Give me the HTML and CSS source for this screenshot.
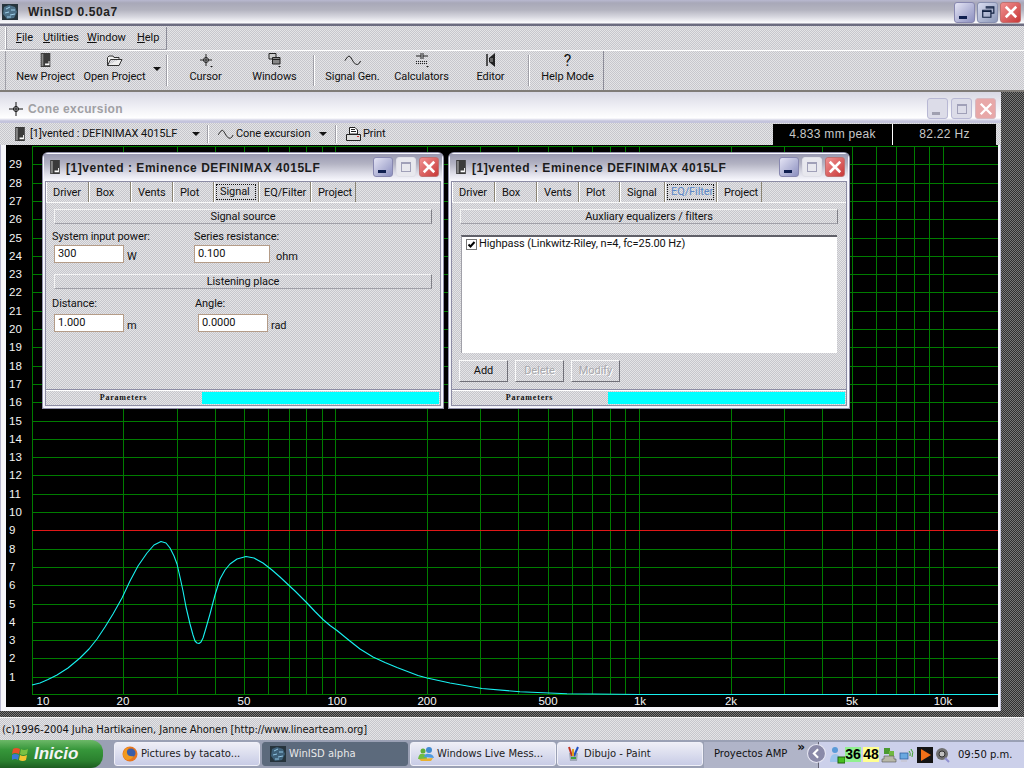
FILE: index.html
```html
<!DOCTYPE html>
<html lang="en">
<head>
<meta charset="utf-8">
<title>WinISD 0.50a7</title>
<link rel="stylesheet" href="styles.css">
</head>
<body>
<svg class="defs" width="0" height="0">
  <symbol id="box" viewBox="0 0 11 16"><path d="M0 0H11V16H0Z" fill="#3a3a3a"/><path d="M1 1H3V15H1Z" fill="#8a8a8a"/><path d="M7 9H9V12H5V14H10V9Z" fill="#fff"/></symbol>
  <symbol id="wave" viewBox="0 0 17 11"><path d="M0 6L3 2Q4.500 0 6 2L9 7Q11 10 13 9.500T16 6" fill="none" stroke="#222" stroke-width="1"/></symbol>
</svg>
<div class="app">
  <header class="titlebar">
    <svg class="app-icon" viewBox="0 0 16 16"><rect width="16" height="16" fill="#26343c"/><path d="M2 3L7 1L13 3L15 8L12 14L5 15L1 10Z" fill="#4b6f86"/><path d="M4 5L8 3M9 6L13 6M3 9L7 8M8 11L13 10M5 13L9 13" stroke="#9fd0ea" stroke-width="1"/></svg>
    <span class="title-main">WinISD 0.50a7</span>
    <div class="caption-btns caption-main">
      <div class="cap cap-min"><i class="glyph-min"></i></div>
      <div class="cap cap-res"><svg viewBox="0 0 12 12" class="glyph"><path d="M4 1.500H11V7H9M1.500 4.500H8.500V10.500H1.500Z" fill="none" stroke="#102040"/><path d="M4 2.500H11M1 5.500H9" stroke="#102040"/></svg></div>
      <div class="cap cap-close"><svg viewBox="0 0 12 12" class="glyph"><path d="M1.500 1.500L10.500 10.500M10.500 1.500L1.500 10.500" stroke="#fff" stroke-width="2.200"/></svg></div>
    </div>
  </header>

  <div class="menubar-row">
    <nav class="menubar">
      <span class="menu-item menu-file"><u>F</u>ile</span>
      <span class="menu-item menu-util"><u>U</u>tilities</span>
      <span class="menu-item menu-win"><u>W</u>indow</span>
      <span class="menu-item"><u>H</u>elp</span>
    </nav>
  </div>

  <div class="toolbar-row">
    <div class="toolbar">
      <div class="tb-btn"><svg class="tb-icon"><use href="#box" x="3" y="1" width="11" height="14"/></svg><span>New Project</span></div>
      <div class="tb-btn"><svg class="tb-icon" viewBox="0 0 18 16"><path d="M1.500 13.500V5.500L3 4H7L8 5.500H13V7.500M1.500 13.500H13L16 7.500H4.500L1.500 13.500Z" fill="#eee" stroke="#333"/></svg><span>Open Project</span></div>
      <i class="arrow arrow-tb"></i>
      <i class="tb-sep tb-sep-a"></i>
      <div class="tb-btn"><svg class="tb-icon" viewBox="0 0 18 16"><path d="M9 2V14M3 8H15" stroke="#222"/><circle cx="9" cy="8" r="2.500" fill="none" stroke="#222"/><path d="M13 14H16L14.500 15.500Z" fill="#222"/></svg><span>Cursor</span></div>
      <div class="tb-btn"><svg class="tb-icon" viewBox="0 0 18 16"><path d="M3 1.500H10V7H3Z" fill="#ccc" stroke="#222"/><path d="M6.500 5.500H14V12H6.500Z" fill="#888" stroke="#222"/><path d="M6.500 7.500H14" stroke="#222"/><path d="M12 14H15L13.500 15.500Z" fill="#222"/></svg><span>Windows</span></div>
      <i class="tb-sep tb-sep-b"></i>
      <div class="tb-btn"><svg class="tb-icon"><use href="#wave" x="0.500" y="3" width="17" height="11"/></svg><span>Signal Gen.</span></div>
      <div class="tb-btn"><svg class="tb-icon" viewBox="0 0 18 16"><path d="M3 9.500H15M3 11.500H15" stroke="#222" stroke-dasharray="1 1"/><path d="M3 4H8M8 1V7M10 1V7M10 4H15" stroke="#222"/><path d="M13 14H16L14.500 15.500Z" fill="#222"/></svg><span>Calculators</span></div>
      <div class="tb-btn"><svg class="tb-icon" viewBox="0 0 18 16"><path d="M5 2V14" stroke="#222" stroke-width="1.500"/><path d="M7 6L13 1V15L7 10Z" fill="#222"/><path d="M8 6H11V10H8Z" fill="#666"/></svg><span>Editor</span></div>
      <i class="tb-sep tb-sep-c"></i>
      <div class="tb-btn"><span class="help-q">?</span><span>Help Mode</span></div>
    </div>
  </div>

  <main class="mdi">
    <section class="cone">
      <div class="cone-title">
        <svg class="cone-cursor" viewBox="0 0 14 14"><path d="M7 0V14M0 7H14" stroke="#111"/><circle cx="7" cy="7" r="2.500" fill="none" stroke="#111"/></svg>
        <span class="cone-name">Cone excursion</span>
        <div class="caption-btns caption-cone">
          <div class="cap cap-off"><i class="glyph-min glyph-min-off"></i></div>
          <div class="cap cap-off"><i class="glyph-max"></i></div>
          <div class="cap cap-close cap-close-off"><svg viewBox="0 0 12 12" class="glyph"><path d="M1.500 1.500L10.500 10.500M10.500 1.500L1.500 10.500" stroke="#fff" stroke-width="2"/></svg></div>
        </div>
      </div>
      <div class="cone-bar">
        <svg class="cb-box"><use href="#box" width="10" height="14"/></svg>
        <span class="cb-proj">[1]vented : DEFINIMAX 4015LF</span>
        <i class="arrow arrow-cb1"></i>
        <i class="cb-sep"></i>
        <svg class="cb-wave"><use href="#wave" width="16" height="11"/></svg>
        <span class="cb-view">Cone excursion</span>
        <i class="arrow arrow-cb2"></i>
        <i class="cb-sep"></i>
        <svg class="cb-print" viewBox="0 0 17 16"><path d="M4.500 1.500H10L12.500 4V8H4.500Z" fill="#fff" stroke="#222"/><path d="M1.500 8.500H15.500V14.500H1.500Z" fill="#ddd" stroke="#222"/><path d="M6 3.500H10M6 5.500H11" stroke="#222"/><path d="M12 10.500H14" stroke="#d03030"/></svg>
        <span class="cb-printlabel">Print</span>
        <div class="readouts">
          <div class="readout readout-a">4.833 mm peak</div>
          <div class="readout readout-b">82.22 Hz</div>
        </div>
      </div>
      <div class="plot">
        <svg class="plot-svg" viewBox="6 144 992 562" width="992" height="562">
          <path class="grid" d="M32.500 145V693M123.500 145V693M177.500 145V693M215.500 145V693M244.500 145V693M268.500 145V693M289.500 145V693M306.500 145V693M322.500 145V693M335.500 145V693M427.500 145V693M480.500 145V693M518.500 145V693M548.500 145V693M572.500 145V693M592.500 145V693M610.500 145V693M625.500 145V693M639.500 145V693M731.500 145V693M784.500 145V693M822.500 145V693M852.500 145V693M876.500 145V693M896.500 145V693M914.500 145V693M929.500 145V693M943.500 145V693"/>
          <path class="grid" d="M32 145.500H998M32 163.500H998M32 182.500H998M32 200.500H998M32 218.500H998M32 237.500H998M32 255.500H998M32 273.500H998M32 291.500H998M32 310.500H998M32 328.500H998M32 346.500H998M32 365.500H998M32 383.500H998M32 401.500H998M32 420.500H998M32 438.500H998M32 456.500H998M32 474.500H998M32 493.500H998M32 511.500H998M32 548.500H998M32 566.500H998M32 584.500H998M32 603.500H998M32 621.500H998M32 639.500H998M32 657.500H998M32 676.500H998M32 693.500H998"/>
          <path class="limit" d="M32 529.500H998"/>
          <polyline class="curve" points="32,684 40,682 48,678.500 57,674 68,667 80,657 89,648 97,638 105,626 113,613 122,597 130,580 138,565 147,552 154,544 161,540.500 166,542 170,547 174,555 177,563 180,576 183,590 186,606 190,623 193,634 195,640 197,642 199,642.500 201,641 203,637 206,627 210,613 215,594 220,578 225,569 230,563 237,558 246,555.500 254,557 263,562 272,569 280,576 288,583.500 295,590 307,602 315,610.500 323,618.500 330,624.500 337,629.500 348,638.500 360,648 373,656 385,661.500 397,666.500 418,674.500 427,677 450,682 482,687.500 520,690.700 567,692.700 640,693.500 998,693.500"/>
          <g class="ylabels">
            <text x="9" y="167">29</text><text x="9" y="186">28</text><text x="9" y="204">27</text><text x="9" y="222">26</text><text x="9" y="241">25</text><text x="9" y="259">24</text><text x="9" y="277">23</text><text x="9" y="295">22</text><text x="9" y="314">21</text><text x="9" y="332">20</text><text x="9" y="350">19</text><text x="9" y="369">18</text><text x="9" y="387">17</text><text x="9" y="405">16</text><text x="9" y="424">15</text><text x="9" y="442">14</text><text x="9" y="460">13</text><text x="9" y="478">12</text><text x="9" y="497">11</text><text x="9" y="515">10</text><text x="9" y="533">9</text><text x="9" y="552">8</text><text x="9" y="570">7</text><text x="9" y="588">6</text><text x="9" y="607">5</text><text x="9" y="625">4</text><text x="9" y="643">3</text><text x="9" y="661">2</text><text x="9" y="680">1</text>
          </g>
          <g class="xlabels">
            <text x="43" y="704">10</text><text x="123" y="704">20</text><text x="244" y="704">50</text><text x="337" y="704">100</text><text x="427" y="704">200</text><text x="548" y="704">500</text><text x="640" y="704">1k</text><text x="731" y="704">2k</text><text x="852" y="704">5k</text><text x="943" y="704">10k</text>
          </g>
        </svg>

        <article class="win win-a">
          <div class="win-title">
            <svg class="win-box"><use href="#box" width="10" height="14"/></svg>
            <span class="win-name">[1]vented : Eminence DEFINIMAX 4015LF</span>
            <div class="caption-btns caption-win">
              <div class="cap cap-min"><i class="glyph-min"></i></div>
              <div class="cap cap-off cap-off-lite"><i class="glyph-max"></i></div>
              <div class="cap cap-close"><svg viewBox="0 0 12 12" class="glyph"><path d="M1.500 1.500L10.500 10.500M10.500 1.500L1.500 10.500" stroke="#fff" stroke-width="2.200"/></svg></div>
            </div>
          </div>
          <div class="win-body">
            <div class="tabs">
              <span class="tab tab-driver">Driver</span><span class="tab">Box</span><span class="tab">Vents</span><span class="tab tab-plot">Plot</span><span class="tab tab-signal tab-active"><em>Signal</em></span><span class="tab tab-eq">EQ/Filter</span><span class="tab tab-project">Project</span>
            </div>
            <div class="panel">
              <div class="section-head">Signal source</div>
              <div class="form-row">
                <div class="field"><label>System input power:</label><div class="input-line"><div class="input input-w70">300</div><span class="unit unit-w">W</span></div></div>
                <div class="field field-b"><label>Series resistance:</label><div class="input-line"><div class="input input-w76">0.100</div><span class="unit unit-ohm">ohm</span></div></div>
              </div>
              <div class="section-head section-second">Listening place</div>
              <div class="form-row form-row-2">
                <div class="field"><label>Distance:</label><div class="input-line"><div class="input input-w70">1.000</div><span class="unit unit-m">m</span></div></div>
                <div class="field field-c"><label>Angle:</label><div class="input-line input-angle"><div class="input input-w70">0.0000</div><span class="unit unit-rad">rad</span></div></div>
              </div>
            </div>
            <div class="win-status"><span class="status-label">Parameters</span><i class="status-fill"></i></div>
          </div>
        </article>

        <article class="win win-b">
          <div class="win-title">
            <svg class="win-box"><use href="#box" width="10" height="14"/></svg>
            <span class="win-name">[1]vented : Eminence DEFINIMAX 4015LF</span>
            <div class="caption-btns caption-win">
              <div class="cap cap-min"><i class="glyph-min"></i></div>
              <div class="cap cap-off cap-off-lite"><i class="glyph-max"></i></div>
              <div class="cap cap-close"><svg viewBox="0 0 12 12" class="glyph"><path d="M1.500 1.500L10.500 10.500M10.500 1.500L1.500 10.500" stroke="#fff" stroke-width="2.200"/></svg></div>
            </div>
          </div>
          <div class="win-body">
            <div class="tabs">
              <span class="tab tab-driver">Driver</span><span class="tab">Box</span><span class="tab">Vents</span><span class="tab tab-plot">Plot</span><span class="tab tab-signal">Signal</span><span class="tab tab-eq tab-active tab-blue"><em>EQ/Filter</em></span><span class="tab tab-project">Project</span>
            </div>
            <div class="panel">
              <div class="section-head">Auxliary equalizers / filters</div>
              <div class="listbox">
                <div class="list-row">
                  <svg class="check" viewBox="0 0 11 11"><rect x="0.500" y="0.500" width="10" height="10" fill="#fff" stroke="#777"/><path d="M2.500 5.500L4.500 7.500L8.500 3" fill="none" stroke="#000" stroke-width="2"/></svg>
                  <span>Highpass (Linkwitz-Riley, n=4, fc=25.00 Hz)</span>
                </div>
              </div>
              <div class="btn-row">
                <div class="btn">Add</div>
                <div class="btn btn-off">Delete</div>
                <div class="btn btn-off">Modify</div>
              </div>
            </div>
            <div class="win-status"><span class="status-label">Parameters</span><i class="status-fill"></i></div>
          </div>
        </article>
      </div>
    </section>
  </main>

  <div class="statusbar">(c)1996-2004 Juha Hartikainen, Janne Ahonen [http://www.linearteam.org]</div>

  <footer class="taskbar">
    <div class="start">
      <svg class="start-logo" viewBox="0 0 17 15"><path d="M1 2Q4 0 8 2L7 7Q3 5 0 7Z" fill="#e8502a"/><path d="M9 2Q12 4 16 2L15 7Q11 9 8 7Z" fill="#7ac142"/><path d="M0 8Q3 6 7 8L6 13Q3 11 0 13Z" fill="#3a78d8"/><path d="M8 8Q11 10 15 8L14 13Q11 15 7 13Z" fill="#f4c430"/></svg>
      <span>Inicio</span>
    </div>
    <div class="task">
      <svg class="task-icon" viewBox="0 0 16 16"><circle cx="8" cy="8" r="7.500" fill="#e8761e"/><circle cx="9" cy="7" r="4.500" fill="#3a5ea8"/><path d="M1 8Q2 2 8 1Q4 3 5 7Q6 11 12 10Q9 14 5 14Q1 12 1 8Z" fill="#f29a1e"/></svg>
      <span>Pictures by tacato...</span>
    </div>
    <div class="task task-active">
      <svg class="task-icon" viewBox="0 0 16 16"><rect width="16" height="16" fill="#26343c"/><path d="M2 3L7 1L13 3L15 8L12 14L5 15L1 10Z" fill="#3e6078"/><path d="M4 5L8 3M9 6L13 6M3 9L7 8M8 11L13 10M5 13L9 13" stroke="#8fc4e2"/></svg>
      <span>WinISD alpha</span>
    </div>
    <div class="task">
      <svg class="task-icon" viewBox="0 0 16 16"><circle cx="5" cy="5" r="2.500" fill="#5fae3a"/><circle cx="11" cy="4" r="3" fill="#3f8ad0"/><path d="M0 13Q1 7 5 8Q9 8 9 13Z" fill="#6fbc44"/><path d="M6 11Q7 7 11 8Q15 8 16 12Z" fill="#4c9ae0"/><path d="M1 13L15 12L13 15L3 15Z" fill="#e8b030"/></svg>
      <span>Windows Live Mess...</span>
    </div>
    <div class="task">
      <svg class="task-icon" viewBox="0 0 16 16"><path d="M4 7H13L12 15H5Z" fill="#a0a8b8"/><path d="M4 1L7 10" stroke="#c03020" stroke-width="2"/><path d="M13 1L9 10" stroke="#2050c0" stroke-width="2"/><path d="M8 3L8 10" stroke="#e0a020" stroke-width="2"/><path d="M6 11H11V13H6Z" fill="#40a040"/></svg>
      <span>Dibujo - Paint</span>
    </div>
    <div class="task-group"><span>Proyectos AMP</span><b class="more">»</b></div>
    <div class="tray-chevron"><svg viewBox="0 0 18 18"><circle cx="9" cy="9" r="8.500" fill="#8a8aa8" stroke="#e8e8f4"/><path d="M10.500 5L6.500 9L10.500 13" fill="none" stroke="#fff" stroke-width="2"/></svg></div>
    <div class="tray">
      <svg class="tray-user" viewBox="0 0 16 18"><circle cx="6" cy="4" r="3" fill="#5a9ad8"/><path d="M1 16Q1 8 6 8Q10 8 11 12V16Z" fill="#9cc4ec"/><rect x="9" y="11" width="7" height="6" fill="#48c020" stroke="#206010"/></svg>
      <span class="tray-num tray-green">36</span>
      <span class="tray-num tray-yellow">48</span>
      <svg class="tray-ic" viewBox="0 0 16 16"><path d="M3 1H9V7H3Z" fill="#4a9a30"/><path d="M8 4H13V9H8Z" fill="#70b840"/><path d="M3 9H13V12H15V15H1V12H3Z" fill="#b8b8a8" stroke="#555" stroke-width="0.600"/></svg>
      <svg class="tray-ic" viewBox="0 0 16 16"><rect x="1" y="6" width="8" height="6" fill="#6aa8e0" stroke="#2a5a98" stroke-width="0.700"/><rect x="2" y="13" width="6" height="2" fill="#c8c8d8"/><path d="M10 4Q12 6 11 9M12 2Q15 5 13 10" fill="none" stroke="#40a030"/></svg>
      <svg class="tray-ic" viewBox="0 0 16 16"><rect width="16" height="16" fill="#141414"/><path d="M4 2L14 8L4 14Z" fill="#f07018"/></svg>
      <svg class="tray-ic" viewBox="0 0 16 16"><circle cx="7" cy="7" r="6" fill="#707070"/><circle cx="7" cy="7" r="3" fill="#c0c0c0" stroke="#303030"/><path d="M10 11L14 15" stroke="#9090d0" stroke-width="2"/></svg>
      <span class="clock">09:50 p.m.</span>
    </div>
  </footer>
</div>
</body>
</html>
```

FILE: styles.css
```css
* { box-sizing: border-box; }
html, body { margin: 0; padding: 0; }
body { width: 1024px; height: 768px; overflow: hidden; font: 11px/14px Roboto, "Liberation Sans", Arial, sans-serif; letter-spacing: -0.080px; color: #111; white-space: nowrap; }
.defs { position: absolute; }

.app { width: 1024px; height: 768px; display: flex; flex-direction: column;
  background-color: #d4d4d8; }

.app, .menubar-row, .toolbar-row, .cone-bar, .win-body, .statusbar {
  background-image: conic-gradient(#c6c6cc 25%, #e4e4e6 0 50%, #c6c6cc 0 75%, #e4e4e6 0);
  background-size: 2px 2px; }

/* main title */
.titlebar { height: 26px; flex: none; display: flex; align-items: center; padding: 0 3px 2px 2px;
  background: linear-gradient(#b8b8d0 0, #a8a8b8 3px, #b4b4c0 10px, #d8d8e0 17px, #fdfdff 23px, #6c6c80 24px, #6c6c80 26px); }
.app-icon { width: 16px; height: 16px; margin-right: 10px; flex: none; }
.title-main { font: bold 12px/14px "Liberation Sans", Arial, sans-serif; letter-spacing: 0.600px; color: #222; }
.caption-btns { margin-left: auto; display: flex; }
.caption-main { gap: 2px; }
.cap { width: 21px; height: 21px; border-radius: 3px; border: 1px solid #fff; display: flex; align-items: center; justify-content: center; position: relative; flex: none; }
.cap-min { background: linear-gradient(135deg, #e4e4f4, #8c90c0); border-color: #8888b0; }
.cap-res { background: linear-gradient(135deg, #d8dcf0, #8c98b8); border-color: #8890b0; }
.cap-close { background: linear-gradient(135deg, #f09090, #c83838); border-color: #c07070; }
.cap-off { background: #dcdce8; border-color: #b8b8d4; }
.cap-off-lite { background: #e8e8ee; border-color: #e0e0e8; }
.cap-close-off { background: #e8a8a8; border-color: #d8b8c0; }
.glyph { width: 14px; height: 14px; display: block; }
.glyph-min { width: 8px; height: 3px; background: #102050; position: absolute; left: 4px; bottom: 3px; }
.glyph-min-off { background: #a0a0b0; }
.glyph-max { width: 10px; height: 10px; border: 1px solid #a0a0b8; border-top-width: 2px; display: block; }

/* menu */
.menubar-row { height: 24px; flex: none; padding: 1px 0 0 5px; }
.menubar { width: 162px; height: 23px; display: flex; align-items: center; padding-left: 10px; border-left: 1px solid #fff; border-right: 1px solid #8c8c98; border-bottom: 1px solid #a0a0a8; box-shadow: inset 1px 0 0 #a0a0a8; }
.menu-item { flex: none; }
.menu-file { width: 27px; }
.menu-util { width: 44px; }
.menu-win { width: 50px; }

/* toolbar */
.toolbar-row { height: 40px; flex: none; padding-left: 5px; border-top: 1px solid #fff; }
.toolbar { width: 599px; height: 39px; display: flex; padding-left: 6px; border-right: 1px solid #8c8c98; box-shadow: inset 1px 0 0 #a0a0a8; }
.tb-btn { width: 69px; display: flex; flex-direction: column; align-items: center; padding-top: 1px; flex: none; }
.tb-icon { width: 18px; height: 16px; margin-bottom: 2px; }
.help-q { height: 16px; margin-bottom: 2px; font-size: 16px; line-height: 17px; }
.tb-sep { width: 1px; height: 31px; margin-top: 4px; background: #a0a0a8; flex: none; box-shadow: 1px 0 0 #fff; }
.tb-sep-a { margin-left: 2px; margin-right: 4px; }
.tb-sep-b { margin-left: 4px; margin-right: 4px; }
.tb-sep-c { margin-left: 3px; margin-right: 4px; }
.arrow { width: 0; height: 0; border: 4px solid transparent; border-top: 4px solid #111; border-bottom: 0; flex: none; }
.arrow-tb { margin: 16px 3px 0 4px; }

/* MDI */
.mdi { flex: 1; min-height: 0; padding: 0 23px 6px 0; border-top: 2px solid #807c78;
  background-color: #555; background-image: conic-gradient(#303030 25%, #787878 0 50%, #303030 0 75%, #787878 0); background-size: 2px 2px; }
.cone { height: 100%; display: flex; flex-direction: column; padding: 0 3px 4px 6px; border-radius: 4px 6px 0 0;
  background: #f6f6fa; box-shadow: inset 1px 0 0 #b8b8d0, inset -1px 0 0 #c8c8e0; }
.cone-title { height: 31px; margin-left: -6px; margin-right: -3px; flex: none; display: flex; align-items: center; padding: 2px 5px 0 9px;
  background: linear-gradient(#d8d8e4, #eeeef4 14px, #fff 26px, #c4c4dc 29px, #c4c4dc 31px); }
.cone-cursor { width: 14px; height: 14px; margin-right: 5px; flex: none; }
.cone-name { font: bold 12px/14px "Liberation Sans", Arial, sans-serif; letter-spacing: 0.350px; color: #a0a0a4; }
.caption-cone { gap: 3px; }
.cone-bar { height: 22px; margin-left: -6px; margin-right: -3px; flex: none; display: flex; align-items: center; padding-left: 15px; }
.cb-box { width: 10px; height: 14px; flex: none; margin-right: 5px; }
.cb-proj { width: 150px; flex: none; }
.arrow-cb1 { margin: 0 7px 0 12px; }
.cb-sep { width: 1px; height: 18px; background: #a0a0a8; box-shadow: 1px 0 0 #fff; flex: none; }
.cb-wave { width: 16px; height: 11px; margin: 0 2px 0 10px; flex: none; }
.cb-view { width: 74px; flex: none; }
.arrow-cb2 { margin: 0 8px 0 9px; }
.cb-print { width: 17px; height: 16px; margin: 0 1px 0 9px; flex: none; }
.cb-printlabel { flex: none; }
.readouts { margin-left: auto; margin-right: 5px; display: flex; gap: 1px; background: #fff; }
.readout { height: 21px; background: #000; color: #c8c8c8; font: 12px/21px "Liberation Sans", Arial, sans-serif; text-align: center; letter-spacing: 0.300px; }
.readout-a { width: 119px; }
.readout-b { width: 103px; }

/* plot */
.plot { flex: 1; position: relative; background: #000; }
.plot-svg { display: block; overflow: visible; }
.grid { stroke: #007c00; stroke-width: 1; fill: none; shape-rendering: crispEdges; }
.limit { stroke: #e01818; stroke-width: 1; fill: none; shape-rendering: crispEdges; }
.curve { stroke: #18f0f0; stroke-width: 1.100; fill: none; stroke-linejoin: round; }
.ylabels text { fill: #f4f4f4; font-size: 11.500px; font-family: "Liberation Sans", Arial, sans-serif; letter-spacing: 0; }
.xlabels text { fill: #f4f4f4; font-size: 11.500px; font-family: "Liberation Sans", Arial, sans-serif; letter-spacing: 0; text-anchor: middle; }

/* child windows */
.win { position: absolute; top: 8px; width: 400px; height: 255px; border-radius: 5px 5px 0 0; display: flex; flex-direction: column; border: 1px solid #f8f8ff; background: #f0f0f6; box-shadow: 0 0 0 1px #9090a8; }
.win-a { left: 37px; }
.win-b { left: 443px; }
.win-title { height: 27px; flex: none; display: flex; align-items: center; padding: 1px 3px 0 6px;
  background: linear-gradient(#9898b0, #b4b4c4 10px, #e0e0ea 20px, #fafaff 27px); }
.win-box { width: 10px; height: 14px; flex: none; margin: -3px 6px 0 0; }
.win-name { font: bold 12px/14px "Liberation Sans", Arial, sans-serif; letter-spacing: 0.530px; color: #1c1c1c; }
.caption-win { gap: 3px; }
.caption-win .cap { width: 20px; height: 20px; margin-top: -2px; }
.win-body { flex: 1; min-height: 0; margin: 0 1px 1px; display: flex; flex-direction: column; border: 1px solid #8c8ca4; }
.tabs { height: 20px; flex: none; display: flex; }
.tab { width: 42px; height: 20px; padding: 4px 0 0 7px; border-right: 1px solid #8a8474; box-shadow: 1px 0 0 #fff inset; }
.tab-driver { width: 43px; }
.tab-plot { width: 41px; }
.tab-signal { width: 45px; }
.tab-eq { width: 52px; padding-left: 5px; }
.tab-project { width: 45px; }
.tab-active { padding: 2px 0 0 2px; }
.tab-active em { display: block; height: 16px; font-style: normal; padding: 0 3px; border: 1px dotted #111; line-height: 14px; width: calc(100% - 2px); }
.tab-blue { color: #5a88c8; }
.panel { flex: 1; min-height: 0; padding: 6px 8px 0 8px; border-top: 1px solid #f8f8f8; }
.section-head { height: 15px; text-align: center; line-height: 14px; border: 1px solid #f4f4f4; border-right-color: #808088; border-bottom-color: #a0a0a8; width: 378px; }
.section-second { margin-top: 10px; }
.form-row { display: flex; margin: 6px 0 0 -2px; }
.form-row-2 { margin-top: 8px; }
.field { width: 142px; flex: none; }
.field-b { width: 200px; }
.field-c { width: 200px; margin-left: 1px; }
.field label { display: block; height: 14px; }
.input-line { display: flex; margin-top: 1px; align-items: flex-start; }
.form-row-2 .input-line { margin-top: 3px; }
.input-angle { margin-left: 1px; }
.input { height: 18px; background: #fff; border: 1px solid #b49c88; padding-left: 3px; line-height: 16px; margin-left: 2px; }
.input-w70 { width: 70px; }
.input-w76 { width: 76px; margin-left: 0; }
.unit { margin-top: 5px; }
.unit-w { margin-left: 3px; }
.unit-ohm { margin-left: 6px; }
.unit-m { margin-left: 3px; }
.unit-rad { margin-left: 3px; }

.listbox { margin: 11px 0 0 1px; width: 376px; height: 118px; background: #fff; border-top: 2px solid #606068; border-left: 1px solid #a0a0a8; padding: 0 0 0 4px; }
.list-row { display: flex; align-items: center; gap: 3px; height: 14px; }
.check { width: 11px; height: 11px; flex: none; margin-right: -1px; }
.btn-row { display: flex; gap: 7px; margin: 7px 0 0 -1px; }
.btn { width: 49px; height: 22px; text-align: center; line-height: 20px; border: 1px solid #fafafa; border-right-color: #707078; border-bottom-color: #707078; }
.btn-off { color: #a8a8ac; text-shadow: 1px 1px 0 #fff; }

.win-status { height: 16px; flex: none; display: flex; align-items: stretch; padding: 2px 1px 1px 0; border-top: 1px solid #8c8ca4; box-shadow: inset 0 1px 0 #fff; }
.status-label { width: 155px; text-align: center; font: bold 8px/12px "Liberation Serif", serif; letter-spacing: 0.800px; }
.status-fill { flex: 1; background: #00ffff; margin-left: 1px; }

/* status */
.statusbar { height: 23px; flex: none; padding: 5px 0 0 2px; font: 10px/14px "DejaVu Sans", sans-serif; border-top: 1px solid #f8f8f8; letter-spacing: -0.090px; }

/* taskbar */
.taskbar { height: 28px; flex: none; display: flex; align-items: stretch; background: #9aa0b4; font: 10px/14px "DejaVu Sans", sans-serif; letter-spacing: 0; }
.start { width: 103px; flex: none; display: flex; align-items: center; padding: 0 0 0 12px; gap: 5px; background: linear-gradient(#6cb868, #36963a 35%, #2a802e 75%, #1c5c20); border-radius: 0 12px 12px 0; color: #f4f4f4; font: italic bold 17px/20px "Liberation Sans", Arial, sans-serif; }
.start-logo { width: 17px; height: 15px; flex: none; }
.task { width: 146px; margin: 2px 1px 2px 0; flex: none; display: flex; align-items: center; gap: 3px; padding-left: 7px; border: 1px solid #f0f0f8; border-radius: 3px; background: linear-gradient(#eeeef6, #c8cce6); color: #222; }
.start + .task { margin-left: 11px; margin-right: 2px; }
.task-active { background: #5c6a7c; border-color: #5c6a7c; color: #e8e8e8; margin-right: 2px; }
.task-icon { width: 16px; height: 16px; flex: none; }
.task-group { width: 114px; flex: none; margin-top: 2px; display: flex; align-items: center; justify-content: space-between; padding: 0 11px 2px 10px; background: #b0b4c8; color: #111; position: relative; }
.more { position: absolute; right: 13px; top: 0; font-size: 12px; line-height: 11px; }
.tray-chevron { position: absolute; left: 807px; top: 744px; width: 19px; height: 19px; }
.tray-chevron svg { display: block; }
.tray { flex: 1; margin-top: 2px; display: flex; align-items: center; padding: 0 0 1px 10px; background: #ccd0ea; border-left: 1px solid #606070; }
.tray-user { width: 16px; height: 18px; flex: none; }
.tray-num { width: 16px; height: 15px; font: bold 14px/15px "Liberation Sans", Arial, sans-serif; text-align: center; color: #000; margin-right: 2px; }
.tray-green { background: #90f090; }
.tray-yellow { background: #ffff90; margin-right: 0; }
.tray-ic { width: 16px; height: 16px; flex: none; margin-left: 2px; }
.clock { margin-left: 7px; color: #111; }
```
